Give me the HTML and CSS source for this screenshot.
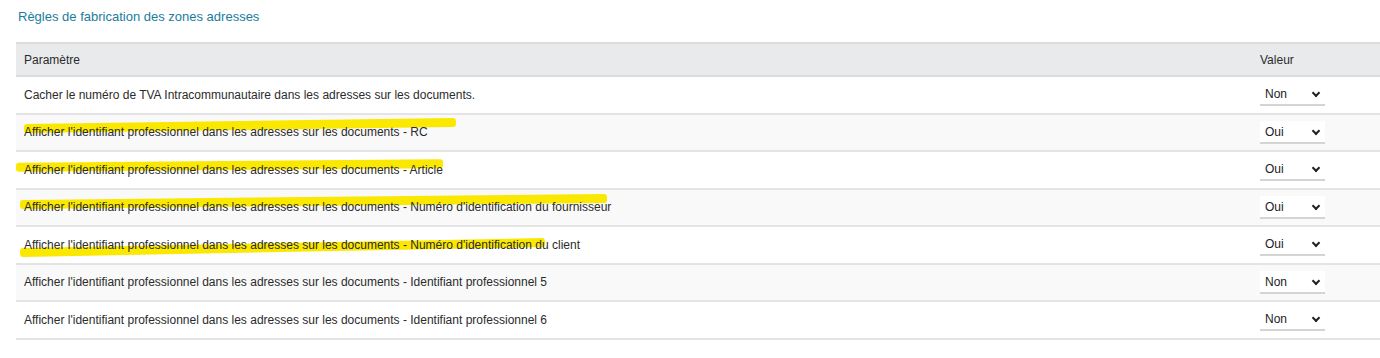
FILE: index.html
```html
<!DOCTYPE html>
<html>
<head>
  <title>Règles de fabrication des zones adresses</title>
  <link rel="stylesheet" href="styles.css">
</head>
<body>
  <h2 class="section-title">Règles de fabrication des zones adresses</h2>

  <table class="params">
    <thead>
      <tr>
        <th class="col-param">Paramètre</th>
        <th class="col-value">Valeur</th>
      </tr>
    </thead>
    <tbody>
      <tr>
        <td>Cacher le numéro de TVA Intracommunautaire dans les adresses sur les documents.</td>
        <td><div class="select">Non<span class="chev"></span></div></td>
      </tr>
      <tr>
        <td><span class="marked m1">Afficher l'identifiant professionnel dans les adresses sur les documents - RC</span></td>
        <td><div class="select">Oui<span class="chev"></span></div></td>
      </tr>
      <tr>
        <td><span class="marked m2">Afficher l'identifiant professionnel dans les adresses sur les documents - Article</span></td>
        <td><div class="select">Oui<span class="chev"></span></div></td>
      </tr>
      <tr>
        <td><span class="marked m3">Afficher l'identifiant professionnel dans les adresses sur les documents - Numéro d'identification du fournisseur</span></td>
        <td><div class="select">Oui<span class="chev"></span></div></td>
      </tr>
      <tr>
        <td><span class="marked m4">Afficher l'identifiant professionnel dans les adresses sur les documents - Numéro d'identification du client</span></td>
        <td><div class="select">Oui<span class="chev"></span></div></td>
      </tr>
      <tr>
        <td>Afficher l'identifiant professionnel dans les adresses sur les documents - Identifiant professionnel 5</td>
        <td><div class="select">Non<span class="chev"></span></div></td>
      </tr>
      <tr>
        <td>Afficher l'identifiant professionnel dans les adresses sur les documents - Identifiant professionnel 6</td>
        <td><div class="select">Non<span class="chev"></span></div></td>
      </tr>
    </tbody>
  </table>
</body>
</html>
```

FILE: styles.css
```css
body {
  margin: 0;
  padding: 0 0 0 16px;
  font-family: "Liberation Sans", Arial, sans-serif;
  font-size: 12px;
  color: #2b2b2b;
  background: #fff;
}

.section-title {
  margin: 0;
  padding: 9px 0 0 2px;
  height: 33px;
  font-size: 13px;
  font-weight: normal;
  color: #1a7d9c;
}

.params {
  width: 100%;
  border-collapse: collapse;
}

.params th {
  text-align: left;
  font-weight: normal;
  background: #e9eaec;
  height: 31px;
  border-top: 2px solid #dcdcdc;
  border-bottom: 2px solid #dcdcdc;
  padding: 0 8px;
}

.params td {
  height: 35.5px;
  padding: 0 8px;
  border-bottom: 2px solid #e4e4e4;
}

.params tbody tr:nth-child(even) td {
  background: #f9f9f9;
}

.col-value {
  width: 112px;
}

.select {
  position: relative;
  width: 65px;
  height: 21px;
  line-height: 23px;
  background: #fff;
  border-bottom: 2px solid #d4d4d4;
  color: #222;
  text-indent: 5px;
}

.chev {
  position: absolute;
  right: 6px;
  top: 7px;
  width: 4px;
  height: 4px;
  border-right: 2px solid #222;
  border-bottom: 2px solid #222;
  transform: rotate(45deg);
}

.marked {
  position: relative;
  z-index: 0;
}

.marked::before {
  content: "";
  position: absolute;
  z-index: -1;
  background: #fbe800;
  border-radius: 3px;
}

.m1::before {
  left: 0;
  width: 432px;
  top: -4px;
  height: 9px;
  transform: rotate(-0.8deg);
}

.m2::before {
  left: -8px;
  width: 427px;
  top: -2px;
  height: 9px;
  transform: rotate(-0.5deg);
}

.m3::before {
  left: -4px;
  width: 587px;
  top: -3px;
  height: 9px;
  transform: rotate(-0.6deg);
}

.m4::before {
  left: -4px;
  width: 525px;
  top: 5px;
  height: 9px;
  transform: rotate(-1.1deg);
}
```
